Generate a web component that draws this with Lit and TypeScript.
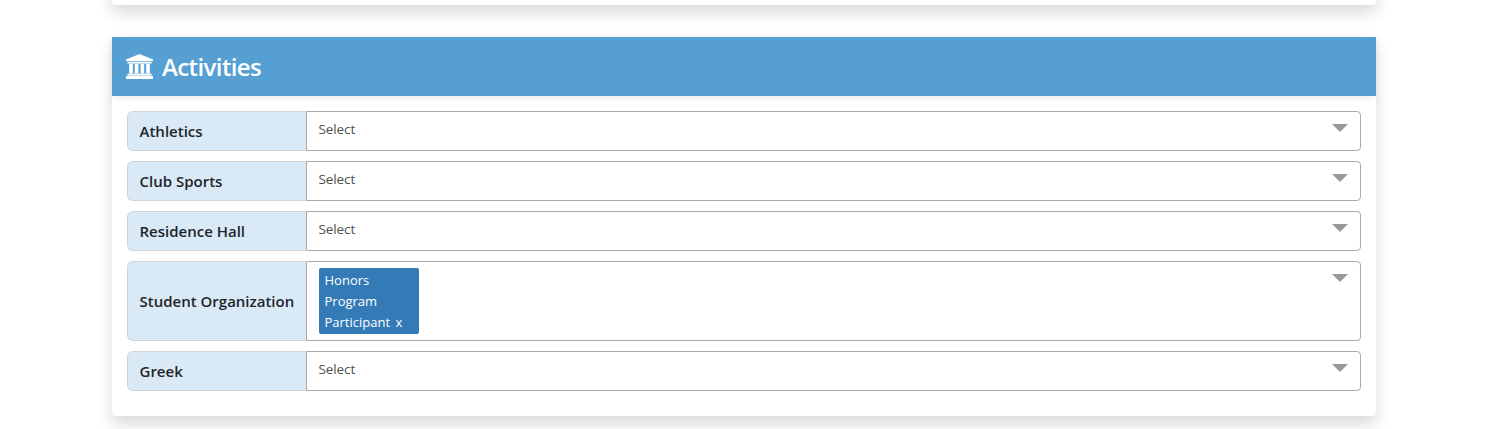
import { LitElement, html, css } from "lit";
import { customElement } from "lit/decorators.js";

const rows = [
  { label: "Athletics" },
  { label: "Club Sports" },
  { label: "Residence Hall" },
  { label: "Student Organization", tag: true },
  { label: "Greek" },
];

@customElement("app-root")
export class AppRoot extends LitElement {
  static styles = css`
    :host { display: block; background: #fff; height: 429px; overflow: hidden; font-family: "Open Sans", "Noto Sans", sans-serif; }
    .wrap { width: 1264px; margin-left: 112px; display: flex; flex-direction: column; gap: 32px; }
    .card { background: #fff; border-radius: 4px; box-shadow: 0 8px 16px rgba(0,0,0,.15); }
    .stub { height: 105px; margin-top: -100px; }
    .main { border-radius: 0 0 4px 4px; }
    .head { height: 59px; background: #569fd3; display: flex; align-items: center; gap: 9px; padding-left: 14px; color: #fff; box-shadow: 0 2px 6px rgba(0,0,0,.08); }
    .head svg { width: 27px; height: 25px; display: block; margin-top: 0; }
    h2 { margin: 0; font-size: 24px; font-weight: 600; line-height: 1; letter-spacing: -.6px; }
    .body { padding: 15px 15px 25px; display: flex; flex-direction: column; gap: 10px; }
    .row { display: flex; min-height: 40px; box-sizing: border-box; }
    .label { width: 179px; box-sizing: border-box; flex: none; background: #dae9f6; border: 1px solid #ced4da; border-right: 0; border-radius: 6px 0 0 6px; display: flex; align-items: center; padding-left: 11.5px; font-size: 15px; font-weight: 600; color: #212529; }
    .select { flex: 1; box-sizing: border-box; background: #fff; border: 1px solid #aaa; border-radius: 0 4px 4px 0; position: relative; padding: 6px 11.5px; font-size: 13.5px; color: #505050; line-height: 21px; }
    .placeholder { display: block; margin-top: 1px; letter-spacing: -.1px; }
    .tag { width: 100px; box-sizing: border-box; margin-left: .5px; background: #337ab7; color: #fff; border-radius: 2px; padding: 2px 5.5px 1px; font-size: 13px; line-height: 21px; }
    .x { margin-left: 2px; }
    .arrow { position: absolute; right: 12px; top: 12px; width: 0; height: 0; border-left: 8px solid transparent; border-right: 8px solid transparent; border-top: 8px solid #999; }
  `;

  render() {
    return html`
      <div class="wrap">
        <div class="card stub"></div>
        <div class="card main">
          <div class="head">
            <svg viewBox="0 0 27 25" fill="#fff" aria-hidden="true">
              <path d="M13.5 0 27 5.4V7.2H0V5.4Z" />
              <rect x="1.5" y="8" width="24" height="1.6" />
              <rect x="3.2" y="10" width="3.6" height="9.4" />
              <rect x="8.8" y="10" width="3.6" height="9.4" />
              <rect x="14.6" y="10" width="3.6" height="9.4" />
              <rect x="20.2" y="10" width="3.6" height="9.4" />
              <rect x="1.5" y="19.6" width="24" height="2" />
              <rect x="0" y="22" width="27" height="3" />
            </svg>
            <h2>Activities</h2>
          </div>
          <div class="body">
            ${rows.map(
              (r) => html`
                <div class="row">
                  <div class="label">${r.label}</div>
                  <div class="select">
                    ${r.tag
                      ? html`<div class="tag">Honors Program Participant <span class="x">x</span></div>`
                      : html`<span class="placeholder">Select</span>`}
                    <span class="arrow"></span>
                  </div>
                </div>
              `
            )}
          </div>
        </div>
      </div>
    `;
  }
}
